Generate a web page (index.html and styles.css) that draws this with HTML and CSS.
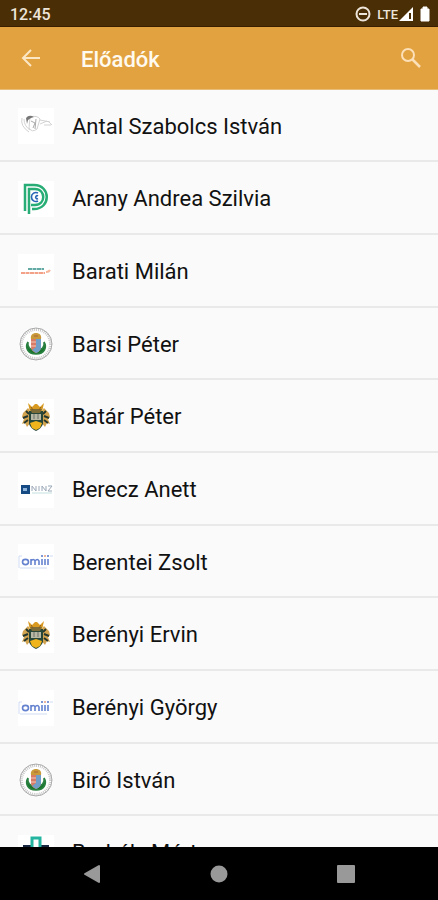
FILE: index.html
```
<!DOCTYPE html>
<html lang="hu">
<head>
  <meta charset="UTF-8">
  <meta name="viewport" content="width=device-width, initial-scale=1">
  <title>Előadók</title>
  <link rel="stylesheet" href="styles.css">
</head>
<body>

<!-- logos used more than once -->
<svg class="sprite" aria-hidden="true">
  <symbol id="logo-seal" viewBox="0 0 36 36">
    <circle cx="18" cy="18" r="17" fill="#fff"/>
    <circle cx="18" cy="18" r="14.5" fill="none" stroke="#c6c6c6" stroke-width="3" stroke-dasharray="1 1"/>
    <circle cx="18" cy="18" r="16" fill="none" stroke="#aaa"/>
    <path d="M10 16c-3 5-1 12 8 12s11-7 8-12c1 5-2 8-8 9-6-1-9-4-8-9z" fill="#17762c" stroke="#2a8040" stroke-width="1.6"/>
    <path d="M13 12h10v9q0 4-5 6-5-2-5-6z" fill="#d77b67"/>
    <path d="M18 12h5v9q0 4-5 6l-4-3 4-3z" fill="#6f9fc9"/>
    <path d="M13 16h5M13 20h5" stroke="#f3c9b9"/>
    <path d="M13 13c-1-4 2-6 5-6s6 2 5 6z" fill="#c99a3a"/>
    <path d="M16 10h4" stroke="#a8623a"/>
  </symbol>
  <symbol id="logo-crest" viewBox="0 0 36 36">
    <path fill="#fff" d="M0 0h36v36H0z"/>
    <path d="M10 4l4 4 3-3h2l3 3 4-4-2 9H12z" fill="#d99a22"/>
    <path d="M5 14l5-5 3 4-2 5 2 5-4 5-2-4-3 1 2-5-2-2zM31 14l-5-5-3 4 2 5-2 5 4 5 2-4 3 1-2-5 2-2z" fill="#d3a450"/>
    <path d="M5 19l5-2M6 24l4-3M31 19l-5-2M30 24l-4-3M8 12l3 3M28 12l-3 3" stroke="#26382d" stroke-width="2"/>
    <path d="M11 12h14v13q-2 5-7 7-5-2-7-7z" fill="#27473b"/>
    <path d="M12 10h12l-2 4h-8z" fill="#7d6b38"/>
    <path d="M13 15h10v6H13z" fill="#b8b9a5"/>
    <path d="M16 15v5M20 15v5" stroke="#6a7068"/>
    <path d="M12 24l6-2 6 2-2 5-4 2-4-2z" fill="#f0b41c"/>
    <path d="M13 8l2 3M23 8l-2 3" stroke="#8c5d1b"/>
  </symbol>
  <symbol id="logo-omiii" viewBox="0 0 36 36">
    <path fill="#fff" d="M0 0h36v36H0z"/>
    <path d="M1 24V12h3M32 12h3M2 24h27" stroke="#cfdcf3" fill="none"/>
    <g fill="none" stroke="#6482cf" stroke-width="1.6">
      <ellipse cx="7.5" cy="18" rx="3" ry="2.6"/>
      <path d="M13 21v-6M13 17q2.500-3 4 0v4M17 17q2.500-3 4 0v4M24 15v6M27 15v6M30 15v6"/>
    </g>
    <path d="M23 12h2M29 12h2" stroke="#7d96d6" stroke-width="2"/>
    <path d="M26 12h2" stroke="#efb49c" stroke-width="2"/>
  </symbol>
</svg>

<div class="screen">
  <div class="status-bar">
    <span class="clock">12:45</span>
    <div class="status-icons">
      <svg width="16" height="16" viewBox="0 0 16 16" aria-hidden="true">
        <circle cx="8" cy="8" r="6.5" fill="none" stroke="#eee5da" stroke-width="2"/>
        <path d="M4 8h8" stroke="#eee5da" stroke-width="2"/>
      </svg>
      <span class="network">LTE</span>
      <svg width="16" height="16" viewBox="0 0 16 16" aria-hidden="true">
        <path d="M1 15L15 1v14z" fill="#fff"/>
        <path d="M12 7v6" stroke="#4a2e06" stroke-width="2"/>
      </svg>
      <svg class="battery" width="10" height="16" viewBox="0 0 10 16" aria-hidden="true">
        <path d="M3 1h4v2h2v12H1V3h2z" fill="#fff" stroke="#fff" stroke-linejoin="round"/>
      </svg>
    </div>
  </div>

  <header class="app-bar">
    <button class="icon-btn" aria-label="Vissza">
      <svg width="20" height="20" viewBox="0 0 20 20">
        <path d="M19 10H2M10 2l-8 8 8 8" fill="none" stroke="#fce7c5" stroke-width="2"/>
      </svg>
    </button>
    <h1>Előadók</h1>
    <button class="icon-btn" aria-label="Keresés">
      <svg width="22" height="22" viewBox="0 0 22 22">
        <circle cx="8" cy="8" r="6" fill="none" stroke="#fbe0b8" stroke-width="2"/>
        <path d="M12 12l8 8" stroke="#fbe0b8" stroke-width="2.500"/>
      </svg>
    </button>
  </header>

  <main class="content">
    <ul class="speakers">
      <li>
        <a href="#">
          <svg class="logo" viewBox="0 0 36 36">
            <path fill="#fff" d="M0 0h36v36H0z"/>
            <g fill="none" stroke="#d2d2d2">
              <path d="M4 10q-2 8 7 14M6 11q0 7 6 11M12 9q7-2 10 2l-3 10q-5 4-8-1zM22 12l10 2M22 16l7-3M30 13l4 4M26 17h7"/>
              <path d="M13 13l4 2-2 5M18 11l-1 10" stroke="#aaa"/>
            </g>
            <path d="M8 10q3-4 8-1l-3 1-3 2-1 4z" fill="#777"/>
          </svg>
          <span>Antal Szabolcs István</span>
        </a>
      </li>
      <li>
        <a href="#">
          <svg class="logo" viewBox="0 0 36 36">
            <path fill="#fff" d="M0 0h36v36H0z"/>
            <path d="M7 30V4h9c17 0 17 24 0 24h-2" fill="none" stroke="#27ad75" stroke-width="2.500"/>
            <path d="M11 33V8h6c11 0 11 16 0 16h-4" fill="none" stroke="#27ad75" stroke-width="2.500"/>
            <path d="M20 12a4.500 4.500 0 1 0 0 8M20 15a1.500 1.500 0 1 0 0 2.500" fill="none" stroke="#2865b5" stroke-width="1.600"/>
          </svg>
          <span>Arany Andrea Szilvia</span>
        </a>
      </li>
      <li>
        <a href="#">
          <svg class="logo" viewBox="0 0 36 36">
            <path fill="#fff" d="M0 0h36v36H0z"/>
            <path d="M10 15h16" stroke="#63aaa4" stroke-width="2" stroke-dasharray="4 .5"/>
            <path d="M3 19h24" stroke="#f3a288" stroke-width="2" stroke-dasharray="4 .5"/>
            <path d="M28 18q3 0 4-2" fill="none" stroke="#f6b69a" stroke-width="2"/>
          </svg>
          <span>Barati Milán</span>
        </a>
      </li>
      <li>
        <a href="#">
          <svg class="logo"><use href="#logo-seal"/></svg>
          <span>Barsi Péter</span>
        </a>
      </li>
      <li>
        <a href="#">
          <svg class="logo"><use href="#logo-crest"/></svg>
          <span>Batár Péter</span>
        </a>
      </li>
      <li>
        <a href="#">
          <svg class="logo" viewBox="0 0 36 36">
            <path fill="#fff" d="M0 0h36v36H0z"/>
            <path fill="#164a83" d="M3 13h9v9H3z"/>
            <path d="M5 16h4v3H5z" fill="#8eb4dc"/>
            <path d="M14 19v-5l4 5v-5M21 14v5M24 19v-5l4 5v-5M30 14h4l-4 5h4" fill="none" stroke="#9aa8b8"/>
            <path d="M14 21h20" stroke="#c5dfdf"/>
          </svg>
          <span>Berecz Anett</span>
        </a>
      </li>
      <li>
        <a href="#">
          <svg class="logo"><use href="#logo-omiii"/></svg>
          <span>Berentei Zsolt</span>
        </a>
      </li>
      <li>
        <a href="#">
          <svg class="logo"><use href="#logo-crest"/></svg>
          <span>Berényi Ervin</span>
        </a>
      </li>
      <li>
        <a href="#">
          <svg class="logo"><use href="#logo-omiii"/></svg>
          <span>Berényi György</span>
        </a>
      </li>
      <li>
        <a href="#">
          <svg class="logo"><use href="#logo-seal"/></svg>
          <span>Biró István</span>
        </a>
      </li>
      <li>
        <a href="#">
          <svg class="logo" viewBox="0 0 36 36">
            <path fill="#fff" d="M0 0h36v36H0z"/>
            <path d="M5 10h9v12H5zM22 10h9v12h-9z" fill="#17263f"/>
            <path d="M14 14V3h8v11" fill="none" stroke="#23b5a0" stroke-width="3"/>
            <path d="M14 20v10h8V20" fill="none" stroke="#23b5a0" stroke-width="3"/>
          </svg>
          <span>Borbély Márta</span>
        </a>
      </li>
    </ul>
  </main>

  <nav class="nav-bar">
    <button aria-label="Vissza">
      <svg width="18" height="20" viewBox="0 0 18 20"><path d="M16 2v16L2 10z" fill="#999" stroke="#999" stroke-width="2" stroke-linejoin="round"/></svg>
    </button>
    <button aria-label="Kezdőképernyő">
      <svg width="18" height="18" viewBox="0 0 18 18"><circle cx="9" cy="9" r="8.500" fill="#999"/></svg>
    </button>
    <button aria-label="Áttekintés">
      <svg width="18" height="18" viewBox="0 0 18 18"><rect width="18" height="18" rx="1" fill="#999"/></svg>
    </button>
  </nav>
</div>

</body>
</html>
```
FILE: styles.css
```
* {
  box-sizing: border-box;
}
body {
  margin: 0;
  background: #fafafa;
  color: #111;
  font-family: Roboto, "Liberation Sans", sans-serif;
}
button {
  padding: 0;
  border: 0;
  background: none;
  cursor: pointer;
}
svg {
  display: block;
}
.sprite {
  display: none;
}
.screen {
  display: flex;
  flex-direction: column;
  height: 100vh;
}

.status-bar {
  display: flex;
  align-items: center;
  justify-content: space-between;
  height: 27px;
  flex-shrink: 0;
  padding: 2px 8px 0 10px;
  background: #4a2e06;
  border-bottom: 1px solid #3b1d02;
  color: #eee5da;
}
.clock {
  font-size: 16px;
  font-weight: 500;
}
.status-icons {
  display: flex;
  align-items: center;
}
.network {
  margin-left: 6px;
  font-size: 13px;
  font-weight: 500;
}
.battery {
  margin-left: 6px;
}

.app-bar {
  display: flex;
  align-items: center;
  height: 63px;
  flex-shrink: 0;
  padding: 0 16px 0 21px;
  background: #e2a240;
  border-bottom: 1px solid #e8bd79;
}
.app-bar h1 {
  flex: 1;
  margin: 2px 0 0 40px;
  color: #fffaf0;
  font-size: 22px;
  font-weight: 500;
}

.content {
  flex: 1;
  min-height: 0;
  overflow-y: auto;
  scrollbar-width: none;
}
.speakers {
  margin: 0;
  padding: 0;
  list-style: none;
}
.speakers a {
  display: flex;
  align-items: center;
  gap: 18px;
  min-height: 73px;
  padding: 2px 18px 0;
  border-bottom: 2px solid #e9e9e9;
  color: #111;
  font-size: 22px;
  text-decoration: none;
}
.speakers li:nth-child(3n+1) a {
  min-height: 72px;
}
.logo {
  width: 36px;
  height: 36px;
  flex-shrink: 0;
}

.nav-bar {
  display: flex;
  align-items: center;
  justify-content: space-around;
  height: 53px;
  flex-shrink: 0;
  padding: 0 28px;
  background: #000;
}
.nav-bar button {
  display: flex;
  justify-content: center;
}
```
